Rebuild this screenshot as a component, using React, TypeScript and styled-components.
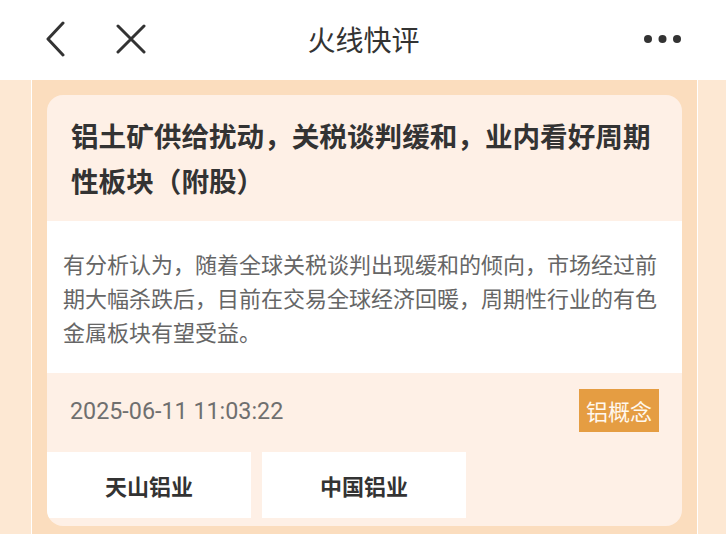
import React from 'react'
import styled, { createGlobalStyle } from 'styled-components'

const GlobalStyle = createGlobalStyle`
    html, body {
        margin: 0;
        padding: 0;
        background: #fde8d3;
        font-family: "Noto Sans CJK SC", "Noto Sans", sans-serif;
    }
`

const stocks = ['天山铝业', '中国铝业']

function BackIcon() {
    return (
        <svg width="24" height="36" viewBox="0 0 24 36" fill="none">
            <path d="M19 2 L4 18 L19 34" stroke="#333" strokeWidth="3" strokeLinecap="round" strokeLinejoin="round" />
        </svg>
    )
}

function CloseIcon() {
    return (
        <svg width="32" height="30" viewBox="0 0 32 30" fill="none">
            <path d="M3 2 L29 28 M29 2 L3 28" stroke="#333" strokeWidth="3" strokeLinecap="round" />
        </svg>
    )
}

function MoreIcon() {
    return (
        <svg width="40" height="10" viewBox="0 0 40 10">
            <circle cx="5" cy="5" r="4" fill="#333" />
            <circle cx="19.5" cy="5" r="4" fill="#333" />
            <circle cx="34" cy="5" r="4" fill="#333" />
        </svg>
    )
}

export default function App() {
    return (
        <>
            <GlobalStyle />
            <Page>
                <Header>
                    <HeaderLeft>
                        <IconButton>
                            <BackIcon />
                        </IconButton>
                        <IconButton>
                            <CloseIcon />
                        </IconButton>
                    </HeaderLeft>
                    <Title>火线快评</Title>
                    <HeaderRight>
                        <MoreIcon />
                    </HeaderRight>
                </Header>
                <Column>
                    <Card>
                        <CardTitle>铝土矿供给扰动，关税谈判缓和，业内看好周期性板块（附股）</CardTitle>
                        <Summary>
                            有分析认为，随着全球关税谈判出现缓和的倾向，市场经过前期大幅杀跌后，目前在交易全球经济回暖，周期性行业的有色金属板块有望受益。
                        </Summary>
                        <MetaRow>
                            <Time>2025-06-11 11:03:22</Time>
                            <Tag>铝概念</Tag>
                        </MetaRow>
                        <StockRow>
                            {stocks.map(s => (
                                <Stock key={s}>{s}</Stock>
                            ))}
                        </StockRow>
                    </Card>
                </Column>
            </Page>
        </>
    )
}

const Page = styled.div`
    width: 726px;
    height: 534px;
    overflow: hidden;
    display: flex;
    flex-direction: column;
`
const Header = styled.div`
    height: 80px;
    flex-shrink: 0;
    background: #fff;
    display: grid;
    grid-template-columns: 1fr auto 1fr;
    align-items: center;
    padding: 0 43px 2px 44px;
    box-sizing: border-box;
`
const HeaderLeft = styled.div`
    display: flex;
    align-items: center;
    gap: 47px;
`
const HeaderRight = styled.div`
    display: flex;
    justify-content: flex-end;
    align-items: center;
`
const IconButton = styled.div`
    display: flex;
    align-items: center;
`
const Title = styled.div`
    font-size: 28px;
    color: #333;
`
const Column = styled.div`
    flex: 1;
    margin: 0 28px 0 31px;
    border-left: 1px solid #fff;
    border-right: 1px solid #fff;
    background: #fbddbe;
    padding: 15px 15px 0 15px;
`
const Card = styled.div`
    background: #fef0e6;
    border-radius: 16px;
    overflow: hidden;
    padding-bottom: 8px;
`
const CardTitle = styled.div`
    padding: 18px 18px 18px 24px;
    font-size: 27.6px;
    line-height: 45px;
    font-weight: 700;
    color: #333;
`
const Summary = styled.div`
    background: #fff;
    padding: 25px 16px;
    font-size: 22px;
    line-height: 34px;
    color: #666;
`
const MetaRow = styled.div`
    display: flex;
    align-items: center;
    justify-content: space-between;
    padding: 16px 23px 20px 23px;
`
const Time = styled.div`
    font-family: Roboto, "Noto Sans CJK SC", sans-serif;
    font-size: 23.3px;
    color: #6f6f6f;
`
const Tag = styled.div`
    background: #e59d42;
    color: #fff8ee;
    font-size: 22px;
    height: 43px;
    line-height: 43px;
    padding: 0 7px;
`
const StockRow = styled.div`
    display: flex;
    gap: 11px;
`
const Stock = styled.div`
    width: 204px;
    height: 66px;
    background: #fff;
    display: flex;
    align-items: center;
    justify-content: center;
    font-size: 22px;
    font-weight: 700;
    color: #333;
`
